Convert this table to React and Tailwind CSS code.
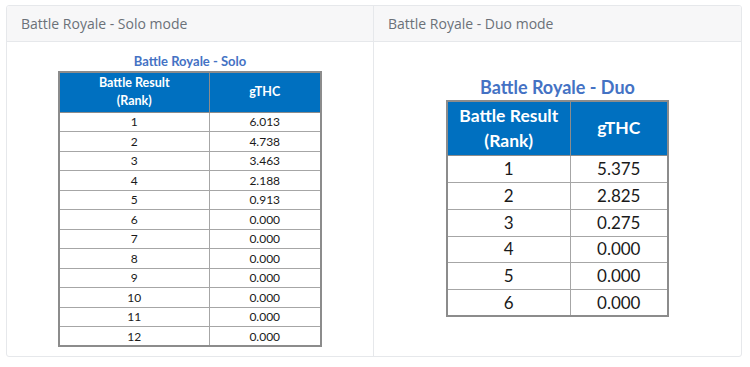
import React from 'react'

const solo = [
  ['1', '6.013'], ['2', '4.738'], ['3', '3.463'], ['4', '2.188'],
  ['5', '0.913'], ['6', '0.000'], ['7', '0.000'], ['8', '0.000'],
  ['9', '0.000'], ['10', '0.000'], ['11', '0.000'], ['12', '0.000'],
]

const duo = [
  ['1', '5.375'], ['2', '2.825'], ['3', '0.275'],
  ['4', '0.000'], ['5', '0.000'], ['6', '0.000'],
]

const tableFont = { fontFamily: 'Lato, "Open Sans", sans-serif' }

const App = () => {
  return (
    <div className="w-[750px] h-[367px] bg-white pt-[5px] pl-[6px]" style={{ fontFamily: '"Open Sans", sans-serif' }}>
      <div className="w-[736px] h-[352px] border border-[#e6e8eb] rounded-[3px] grid grid-cols-2 overflow-hidden">
        {/* solo */}
        <div className="flex flex-col border-r border-[#e6e8eb]">
          <div className="h-[36px] shrink-0 bg-[#f7f7f8] border-b border-[#e6e8eb] flex items-center px-[14px] text-[14px] text-[#6b7178]">
            Battle Royale - Solo mode
          </div>
          <div className="flex-1 flex flex-col items-center pt-[11px]" style={tableFont}>
            <div className="text-[13px] font-bold text-[#4472c4] leading-[16px] mb-[2px]">Battle Royale - Solo</div>
            <table className="border-collapse border-2 border-[#8c8c8c] w-[264px] text-[12px] text-[#1a1a1a]">
              <thead>
                <tr className="bg-[#0070c0] text-white">
                  <th className="w-[150px] h-[40px] border border-[#8c8c8c] text-[12.5px] leading-[18px] font-bold">Battle Result<br />(Rank)</th>
                  <th className="border border-[#8c8c8c] text-[12.5px] font-bold">gTHC</th>
                </tr>
              </thead>
              <tbody>
                {solo.map(([r, v]) => (
                  <tr key={r} className="h-[19.5px]">
                    <td className="border border-[#a6a6a6] text-center leading-[15px] p-0">{r}</td>
                    <td className="border border-[#a6a6a6] text-center leading-[15px] p-0">{v}</td>
                  </tr>
                ))}
              </tbody>
            </table>
          </div>
        </div>
        {/* duo */}
        <div className="flex flex-col">
          <div className="h-[36px] shrink-0 bg-[#f7f7f8] border-b border-[#e6e8eb] flex items-center px-[14px] text-[14px] text-[#6b7178]">
            Battle Royale - Duo mode
          </div>
          <div className="flex-1 flex flex-col items-center justify-center pb-[4px]" style={tableFont}>
            <div className="text-[18px] font-bold text-[#4472c4] leading-[21px] mb-[2px]">Battle Royale - Duo</div>
            <table className="border-collapse border-2 border-[#8c8c8c] w-[223px] text-[17px] text-[#1a1a1a]">
              <thead>
                <tr className="bg-[#0070c0] text-white">
                  <th className="w-[123px] h-[55px] border border-[#8c8c8c] text-[17.5px] leading-[25px] font-bold">Battle Result<br />(Rank)</th>
                  <th className="border border-[#8c8c8c] text-[17.5px] font-bold">gTHC</th>
                </tr>
              </thead>
              <tbody>
                {duo.map(([r, v]) => (
                  <tr key={r} className="h-[26.8px]">
                    <td className="border border-[#a6a6a6] text-center leading-[20px] p-0">{r}</td>
                    <td className="border border-[#a6a6a6] text-center leading-[20px] p-0">{v}</td>
                  </tr>
                ))}
              </tbody>
            </table>
          </div>
        </div>
      </div>
    </div>
  )
}

export default App
